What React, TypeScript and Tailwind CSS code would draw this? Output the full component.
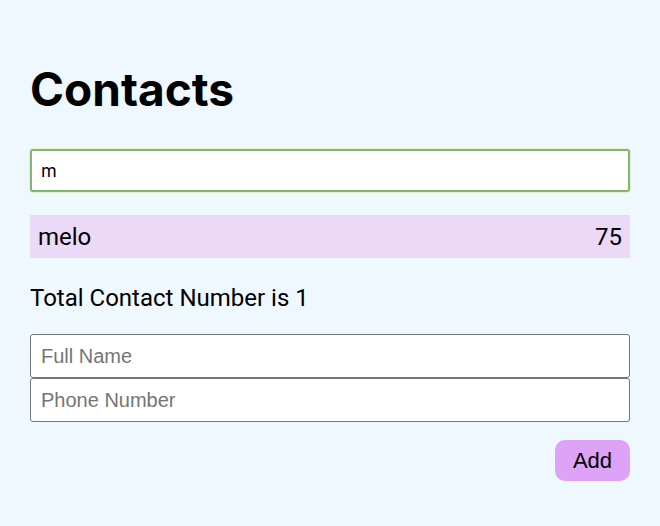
import React from "react";

export default function App() {
  return (
    <div className="min-h-[526px] w-full bg-[#f0f8ff] px-[30px] pt-[62px] font-[Inter,sans-serif]">
      <h1 className="text-[46px] font-bold leading-[54px] text-black">Contacts</h1>
      <input
        className="mt-[33px] block h-[43px] w-full rounded-[3px] border-2 border-[#80b96b] bg-white px-[9px] font-[Inter,sans-serif] text-[18px] text-black outline-none shadow-[0_0_0_1px_#e3f0dc]"
        defaultValue="m"
      />
      <div className="mt-[23px] flex h-[43px] items-center justify-between bg-[#ecd8f7] px-[8px] font-[Roboto,sans-serif] text-[24px] text-black">
        <span>melo</span>
        <span>75</span>
      </div>
      <p className="mt-[24px] font-[Roboto,sans-serif] text-[24px] leading-[32px] text-black">Total Contact Number is 1</p>
      <div className="mt-[20px] flex flex-col">
        <input
          className="block h-[44px] w-full rounded-[3px] border border-[#767676] bg-white px-[10px] font-['Liberation_Sans',Arial,sans-serif] text-[20px] outline-none placeholder:text-[#757575]"
          placeholder="Full Name"
        />
        <input
          className="block h-[44px] w-full rounded-[3px] border border-[#767676] bg-white px-[10px] font-['Liberation_Sans',Arial,sans-serif] text-[20px] outline-none placeholder:text-[#757575]"
          placeholder="Phone Number"
        />
      </div>
      <div className="mt-[18px] flex justify-end">
        <button className="h-[41px] w-[75px] rounded-[10px] bg-[#dea2f6] font-['Liberation_Sans',Arial,sans-serif] text-[22px] text-black">
          Add
        </button>
      </div>
    </div>
  );
}
